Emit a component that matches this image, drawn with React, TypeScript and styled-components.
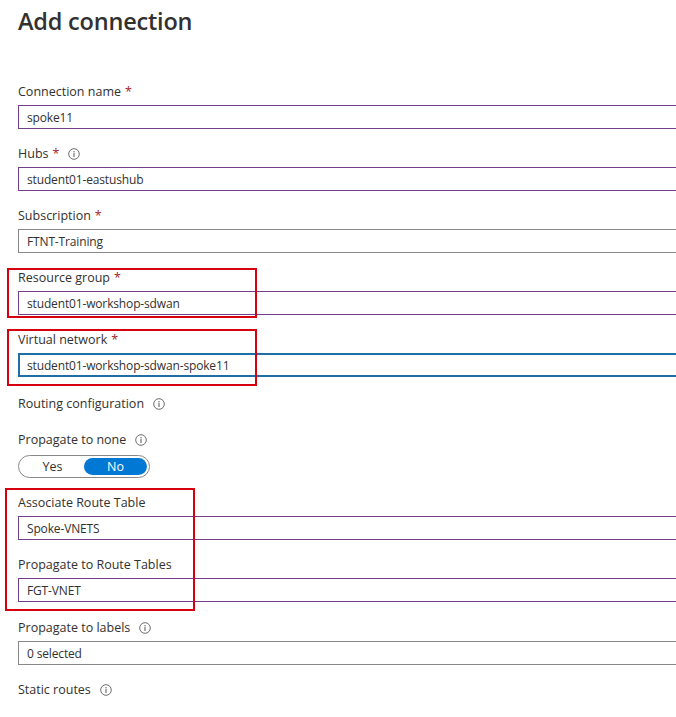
import React from 'react';
import styled, { createGlobalStyle } from 'styled-components';

const GlobalStyle = createGlobalStyle`
  html, body {
    margin: 0;
    padding: 0;
    background: #ffffff;
    overflow: hidden;
  }
  body {
    font-family: 'Open Sans', 'Noto Sans', sans-serif;
    color: #323130;
  }
`;

const Page = styled.div`
  position: relative;
  width: 676px;
  height: 717px;
  overflow: hidden;
  padding: 0 0 0 18px;
  box-sizing: border-box;
`;

const Title = styled.h1`
  margin: 0;
  padding-top: 5px;
  height: 32px;
  line-height: 32px;
  font-size: 23.5px;
  font-weight: 600;
  color: #323130;
  letter-spacing: -0.2px;
`;

const Form = styled.div`
  display: flex;
  flex-direction: column;
  margin-top: 46px;
`;

const Field = styled.div<{ $gap?: number }>`
  display: flex;
  flex-direction: column;
  margin-top: ${({ $gap }) => ($gap ?? 16)}px;

  &:first-child {
    margin-top: 0;
  }
`;

const Label = styled.div`
  display: flex;
  align-items: center;
  height: 18px;
  line-height: 18px;
  font-size: 12.5px;
  color: #323130;
  margin-bottom: 4px;
`;

const Required = styled.span`
  color: #a4262c;
  margin-left: 4px;
`;

const InfoIcon = styled.svg`
  margin-left: 9px;
  width: 12px;
  height: 12px;
  flex-shrink: 0;
`;

type Tone = 'dirty' | 'plain' | 'focus';

const borderFor = (tone: Tone) =>
  tone === 'focus' ? '2px solid #1f6ea6' : tone === 'plain' ? '1px solid #8a8886' : '1px solid #743e8e';

const Input = styled.div<{ $tone: Tone }>`
  box-sizing: border-box;
  width: 720px;
  height: 24px;
  border: ${({ $tone }) => borderFor($tone)};
  padding-left: ${({ $tone }) => ($tone === 'focus' ? 7 : 8)}px;
  display: flex;
  align-items: center;
  font-size: 12px;
  letter-spacing: -0.15px;
  color: #323130;
`;

const Toggle = styled.div`
  box-sizing: border-box;
  width: 132px;
  height: 23px;
  border: 1px solid #8a8886;
  border-radius: 12px;
  display: grid;
  grid-template-columns: 1fr 1fr;
  padding: 2px;
  margin-top: 2px;
`;

const ToggleOption = styled.div<{ $active?: boolean }>`
  display: flex;
  align-items: center;
  justify-content: center;
  border-radius: 10px;
  font-size: 12.5px;
  background: ${({ $active }) => ($active ? '#0078d4' : 'transparent')};
  color: ${({ $active }) => ($active ? '#ffffff' : '#323130')};
`;

const Highlight = styled.div<{ $x: number; $y: number; $w: number; $h: number }>`
  position: absolute;
  left: ${({ $x }) => $x}px;
  top: ${({ $y }) => $y}px;
  width: ${({ $w }) => $w}px;
  height: ${({ $h }) => $h}px;
  border: 2px solid #d6000f;
  box-sizing: border-box;
  pointer-events: none;
`;

const Info = () => (
  <InfoIcon viewBox="0 0 12 12">
    <circle cx="6" cy="6" r="5.3" fill="none" stroke="#605e5c" strokeWidth="0.9" />
    <circle cx="6" cy="3.7" r="0.7" fill="#605e5c" />
    <rect x="5.45" y="5.1" width="1.1" height="3.8" fill="#605e5c" />
  </InfoIcon>
);

interface FieldLabelProps {
  text: string;
  required?: boolean;
  info?: boolean;
}

const FieldLabel: React.FC<FieldLabelProps> = ({ text, required, info }) => (
  <Label>
    {text}
    {required && <Required>*</Required>}
    {info && <Info />}
  </Label>
);

const App: React.FC = () => {
  return (
    <>
      <GlobalStyle />
      <Page>
        <Title>Add connection</Title>
        <Form>
          <Field>
            <FieldLabel text="Connection name" required />
            <Input $tone="dirty">spoke11</Input>
          </Field>
          <Field>
            <FieldLabel text="Hubs" required info />
            <Input $tone="dirty">student01-eastushub</Input>
          </Field>
          <Field>
            <FieldLabel text="Subscription" required />
            <Input $tone="plain">FTNT-Training</Input>
          </Field>
          <Field>
            <FieldLabel text="Resource group" required />
            <Input $tone="dirty">student01-workshop-sdwan</Input>
          </Field>
          <Field>
            <FieldLabel text="Virtual network" required />
            <Input $tone="focus">student01-workshop-sdwan-spoke11</Input>
          </Field>
          <Field $gap={18}>
            <FieldLabel text="Routing configuration" info />
          </Field>
          <Field $gap={14}>
            <FieldLabel text="Propagate to none" info />
            <Toggle>
              <ToggleOption>Yes</ToggleOption>
              <ToggleOption $active>No</ToggleOption>
            </Toggle>
          </Field>
          <Field>
            <FieldLabel text="Associate Route Table" />
            <Input $tone="dirty">Spoke-VNETS</Input>
          </Field>
          <Field>
            <FieldLabel text="Propagate to Route Tables" />
            <Input $tone="dirty">FGT-VNET</Input>
          </Field>
          <Field $gap={17}>
            <FieldLabel text="Propagate to labels" info />
            <Input $tone="plain">0 selected</Input>
          </Field>
          <Field>
            <FieldLabel text="Static routes" info />
          </Field>
        </Form>
        <Highlight $x={7} $y={268} $w={250} $h={50} />
        <Highlight $x={7} $y={329} $w={250} $h={57} />
        <Highlight $x={5} $y={488} $w={190} $h={123} />
      </Page>
    </>
  );
};

export default App;
